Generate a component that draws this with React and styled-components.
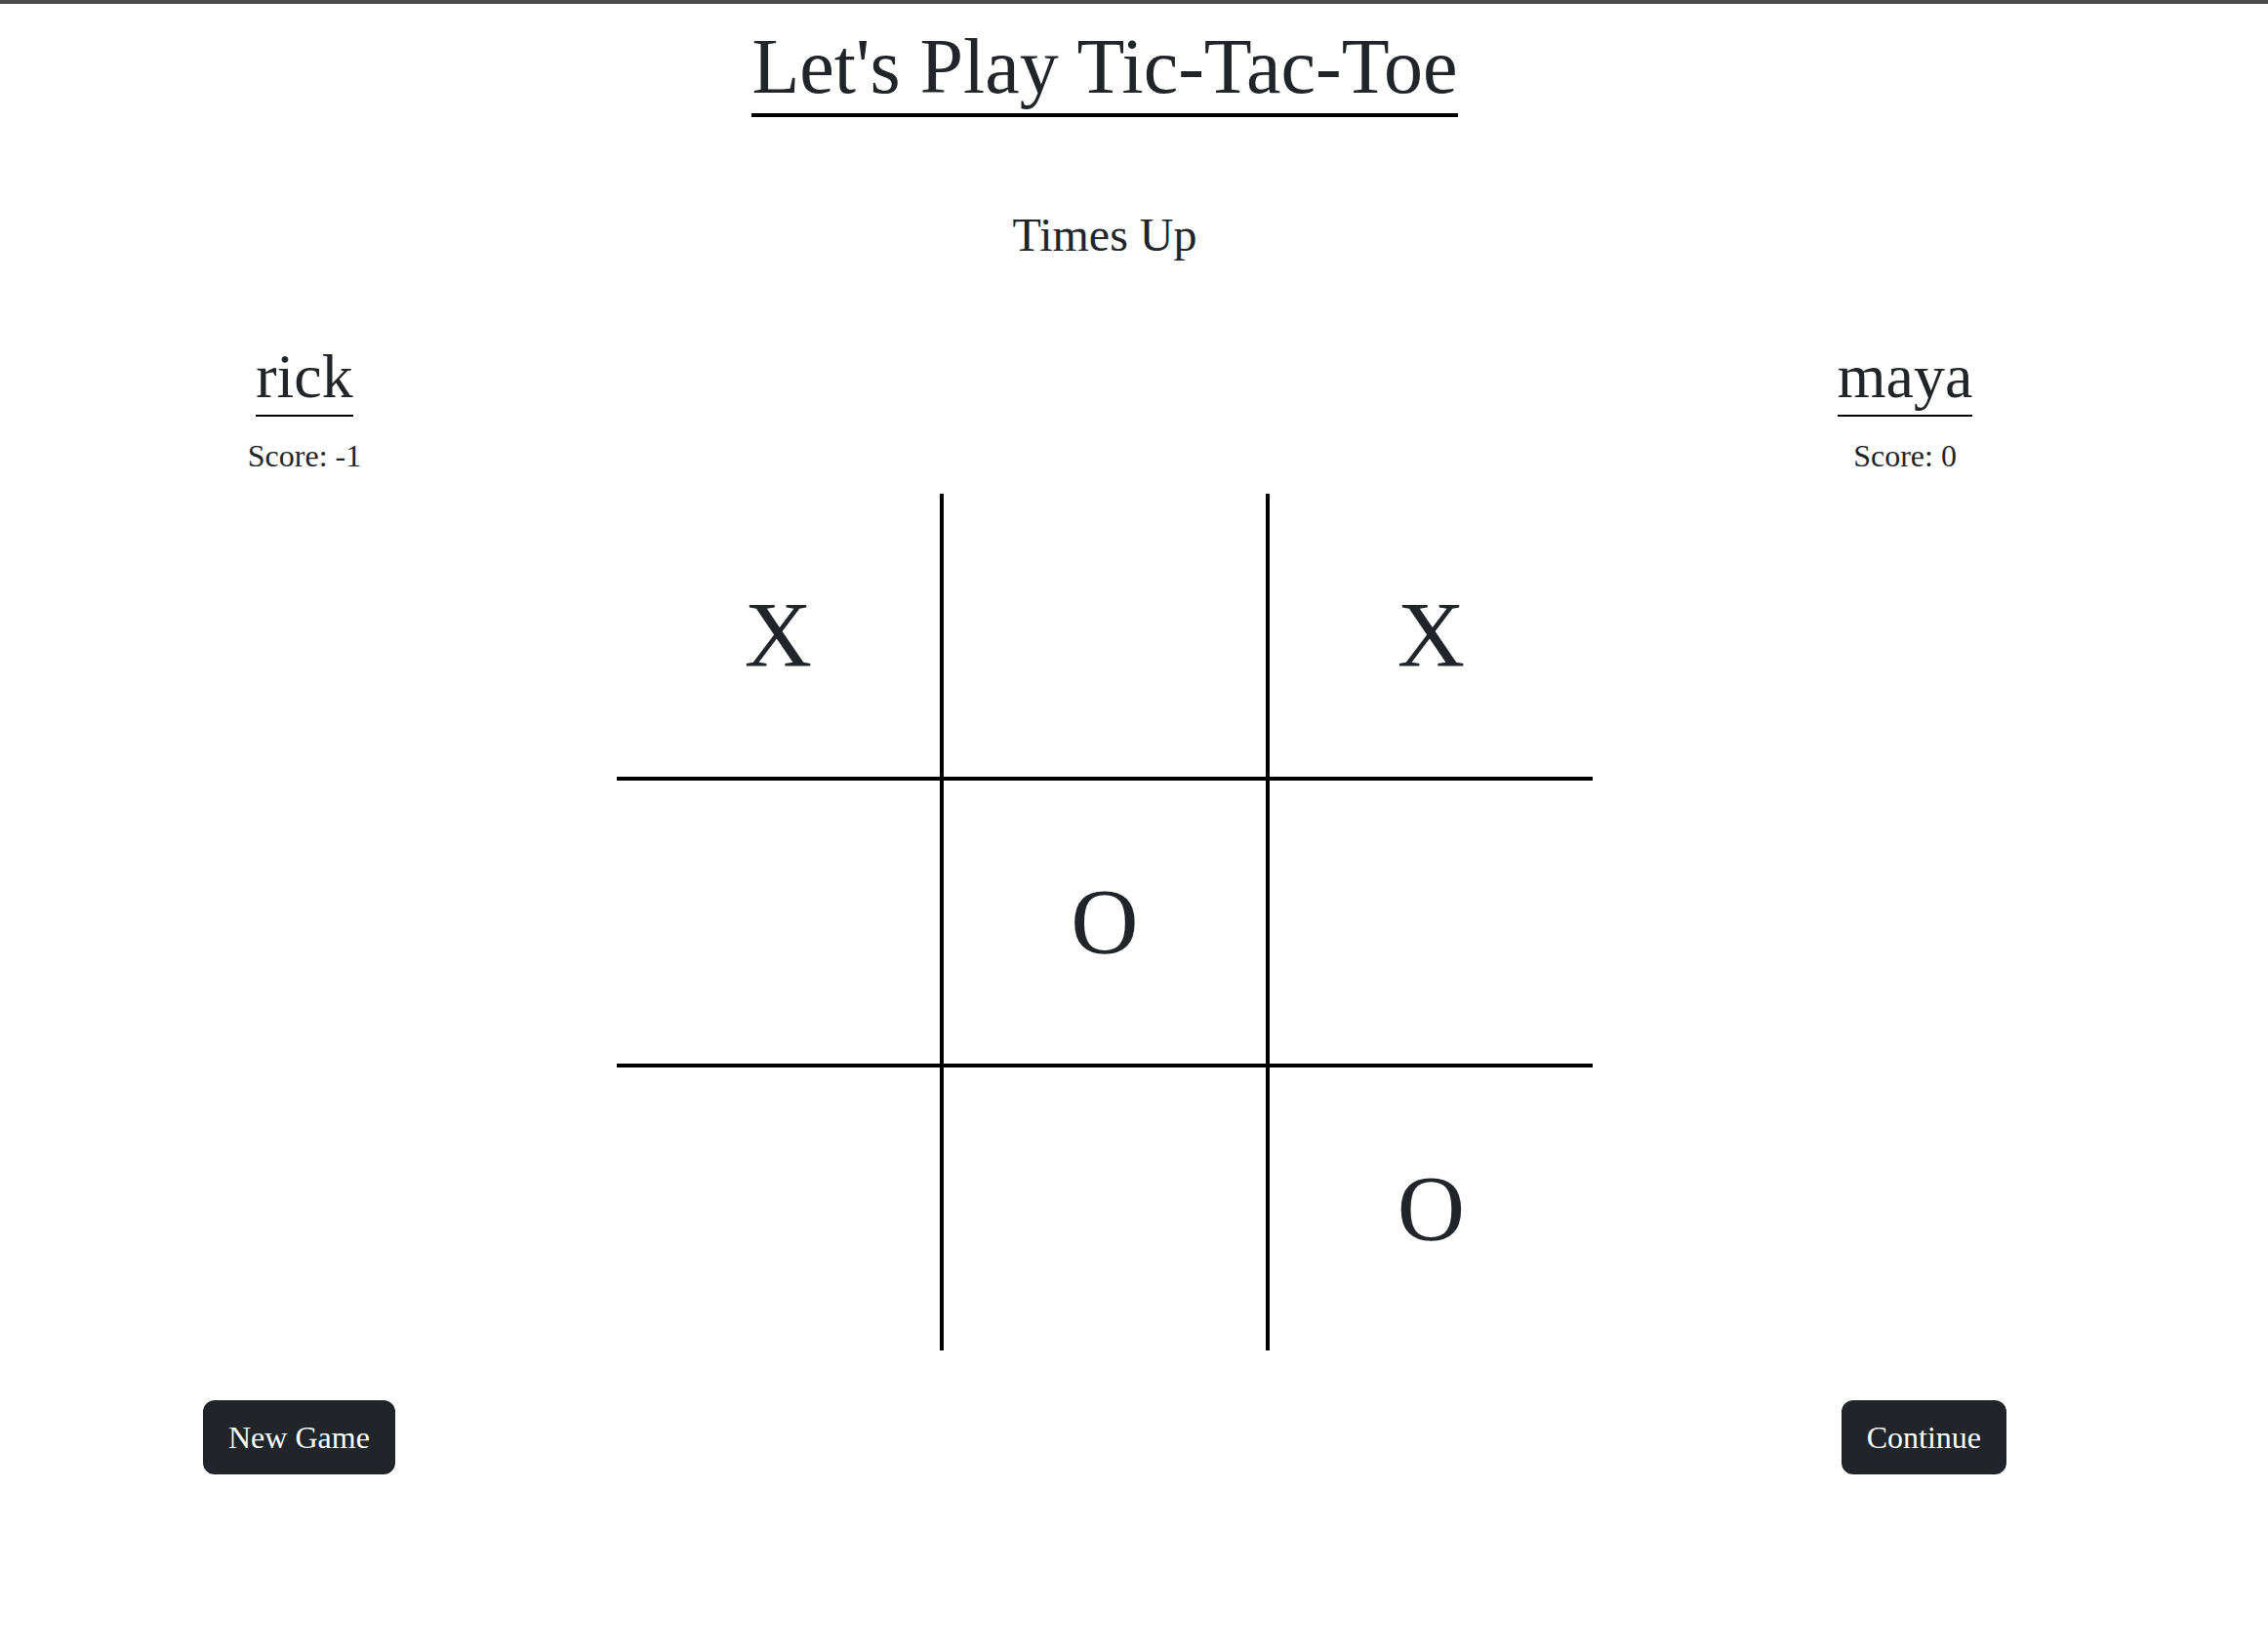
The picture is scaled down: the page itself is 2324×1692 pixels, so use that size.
import React from 'react';
import styled, { createGlobalStyle } from 'styled-components';

const GlobalStyle = createGlobalStyle`
  html, body {
    margin: 0;
    padding: 0;
    background: #fff;
  }
  body {
    font-family: "Liberation Serif", "Times New Roman", serif;
    color: #212529;
    border-top: 4px solid #4a4a4a;
  }
`;

const Main = styled.main`
  width: 2264px;
  padding: 16px 208px 80px 208px;
  box-sizing: border-box;
`;

const Header = styled.header`
  text-align: center;
`;

const Title = styled.h1`
  display: inline-block;
  margin: 0;
  font-size: 80px;
  font-weight: 400;
  line-height: 1.2;
  border-bottom: 4px solid #000;
`;

const Status = styled.h3`
  margin: 92px 0 0 0;
  font-size: 48px;
  font-weight: 400;
  line-height: 1.2;
  text-align: center;
`;

const PlayersRow = styled.div`
  display: flex;
  justify-content: space-between;
  margin-top: 78px;
`;

const Player = styled.div`
  width: 208px;
  text-align: center;
`;

const PlayerName = styled.h2`
  display: inline-block;
  margin: 0;
  font-size: 64px;
  font-weight: 400;
  line-height: 1.2;
  padding-bottom: 1px;
  border-bottom: 2px solid #000;
`;

const Score = styled.p`
  margin: 16px 0 0 0;
  font-size: 32px;
  line-height: 48px;
`;

const Board = styled.div`
  display: grid;
  grid-template-columns: 335px 334px 331px;
  grid-template-rows: 294px 294px 290px;
  width: 1000px;
  margin: 15px auto 0 auto;
`;

const Cell = styled.div`
  box-sizing: border-box;
  display: flex;
  align-items: center;
  justify-content: center;
  font-size: 96px;
  line-height: 1;
  border-right: ${({ $right }) => ($right ? '4px solid #000' : 'none')};
  border-bottom: ${({ $bottom }) => ($bottom ? '4px solid #000' : 'none')};
`;

const ButtonRow = styled.div`
  display: flex;
  justify-content: space-between;
  margin-top: 51px;
`;

const Button = styled.button`
  font-family: inherit;
  font-size: 32px;
  line-height: 48px;
  padding: 12px 24px;
  color: #fff;
  background: #212529;
  border: 2px solid #212529;
  border-radius: 12px;
  cursor: pointer;
`;

const players = [
  { name: 'rick', score: -1 },
  { name: 'maya', score: 0 },
];

const squares = ['X', '', 'X', '', 'O', '', '', '', 'O'];

const App = () => {
  return (
    <>
      <GlobalStyle />
      <Main>
        <Header>
          <Title>Let's Play Tic-Tac-Toe</Title>
        </Header>
        <Status>Times Up</Status>
        <PlayersRow>
          {players.map((p) => (
            <Player key={p.name}>
              <PlayerName>{p.name}</PlayerName>
              <Score>Score: {p.score}</Score>
            </Player>
          ))}
        </PlayersRow>
        <Board>
          {squares.map((mark, i) => (
            <Cell key={i} $right={i % 3 !== 2} $bottom={i < 6}>
              {mark}
            </Cell>
          ))}
        </Board>
        <ButtonRow>
          <Button>New Game</Button>
          <Button>Continue</Button>
        </ButtonRow>
      </Main>
    </>
  );
};

export default App;
